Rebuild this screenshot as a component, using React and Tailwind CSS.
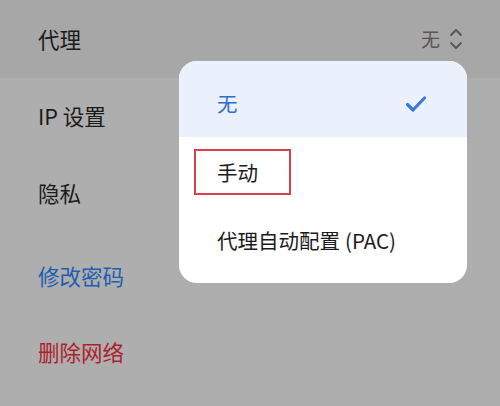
import React from 'react';

const font = { fontFamily: '"Noto Sans CJK SC", "Noto Sans", sans-serif' };

const rows = [
    { label: '代理', h: 'h-[78px]', cls: 'text-[#1b1b1b] bg-[#a7a7a7]', value: true },
    { label: 'IP 设置', h: 'h-[76px]', cls: 'text-[#1b1b1b]' },
    { label: '隐私', h: 'h-[78px]', cls: 'text-[#1b1b1b]' },
    { label: '修改密码', h: 'h-[88px]', cls: 'text-[#1f5db3]' },
    { label: '删除网络', h: 'h-[64px]', cls: 'text-[#ad1f2a]' },
];

function UpDown() {
    return (
        <svg width="14" height="24" viewBox="0 0 14 24" fill="none" stroke="#5a5a5a" strokeWidth="2" strokeLinecap="round" strokeLinejoin="round">
            <path d="M2 8l5-5 5 5" />
            <path d="M2 16l5 5 5-5" />
        </svg>
    );
}

function Check() {
    return (
        <svg width="22" height="18" viewBox="0 0 22 18" fill="none" stroke="#3a78dc" strokeWidth="3.2" strokeLinecap="round" strokeLinejoin="round">
            <path d="M2.5 9.5l5.5 5.5L19.5 3" />
        </svg>
    );
}

export default function App() {
    return (
        <div className="relative w-[500px] h-[406px] overflow-hidden bg-[#aeaeae]" style={font}>
            <div className="mx-[40px] h-px bg-[#b8b8b8]" />
            <div className="flex flex-col -mt-px">
                {rows.map((r) => (
                    <div key={r.label} className={`${r.h} ${r.cls} flex items-center justify-between pl-[38px] pr-[37px] text-[21.5px]`}>
                        <span>{r.label}</span>
                        {r.value && (
                            <span className="flex items-center gap-[9px] text-[19px] text-[#555]">
                                无
                                <UpDown />
                            </span>
                        )}
                    </div>
                ))}
            </div>

            {/* Dropdown menu */}
            <div className="absolute left-[179px] top-[61px] w-[288px] rounded-[18px] bg-white overflow-hidden flex flex-col pb-[8px] text-[20.5px]">
                <div className="h-[76px] bg-[#ebf1fc] flex items-center justify-between pt-[9px] pl-[38px] pr-[40px] text-[#2f6cd0]">
                    <span>无</span>
                    <Check />
                </div>
                <div className="h-[70px] flex items-center pl-[15px]">
                    <div className="w-[97px] h-[46px] border-2 border-[#d9404a] flex items-center pl-[21px] text-[#1b1b1b]">
                        手动
                    </div>
                </div>
                <div className="h-[68px] flex items-center pl-[38px] pb-[2px] text-[#1b1b1b]">
                    代理自动配置 <span className="ml-[5px]">(PAC)</span>
                </div>
            </div>
        </div>
    );
}
